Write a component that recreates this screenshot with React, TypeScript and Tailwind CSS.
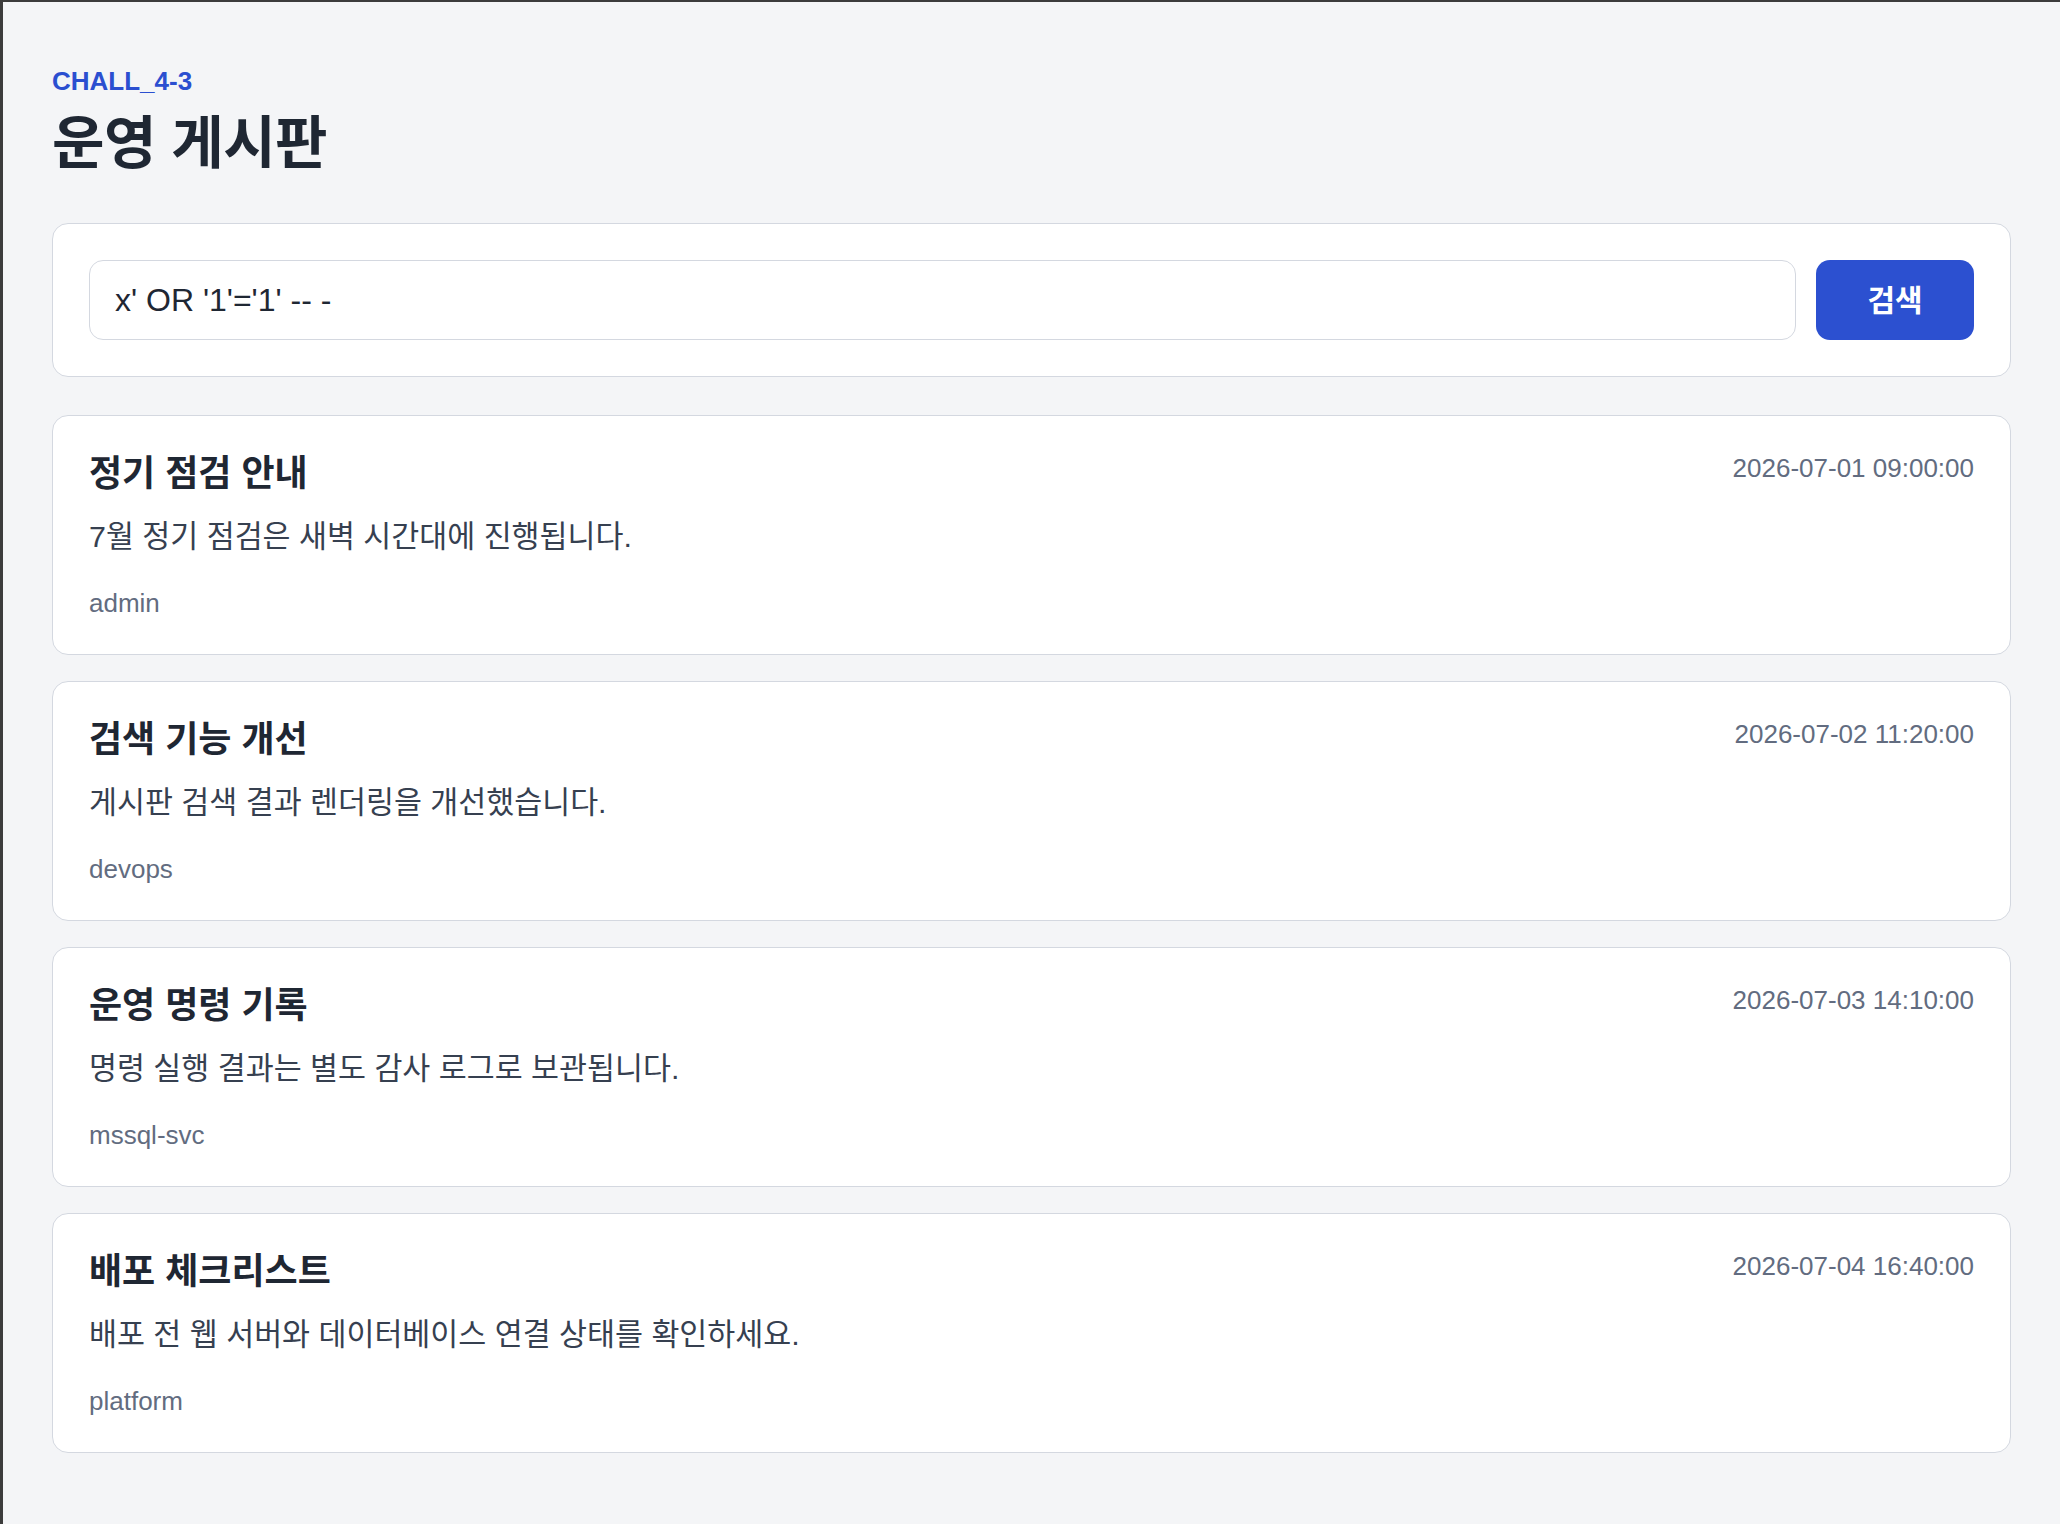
import React, { useState } from 'react';

type Post = {
  title: string;
  body: string;
  author: string;
  createdAt: string;
};

const posts: Post[] = [
  {
    title: '정기 점검 안내',
    body: '7월 정기 점검은 새벽 시간대에 진행됩니다.',
    author: 'admin',
    createdAt: '2026-07-01 09:00:00',
  },
  {
    title: '검색 기능 개선',
    body: '게시판 검색 결과 렌더링을 개선했습니다.',
    author: 'devops',
    createdAt: '2026-07-02 11:20:00',
  },
  {
    title: '운영 명령 기록',
    body: '명령 실행 결과는 별도 감사 로그로 보관됩니다.',
    author: 'mssql-svc',
    createdAt: '2026-07-03 14:10:00',
  },
  {
    title: '배포 체크리스트',
    body: '배포 전 웹 서버와 데이터베이스 연결 상태를 확인하세요.',
    author: 'platform',
    createdAt: '2026-07-04 16:40:00',
  },
];

const PostCard: React.FC<{ post: Post }> = ({ post }) => (
  <article className="bg-white border border-[#d4d8e0] rounded-[16px] px-[36px] pt-[38px] pb-[33px]">
    <div className="flex items-start justify-between gap-6">
      <h2 className="text-[36px] leading-[40px] font-bold text-[#1f2733]">{post.title}</h2>
      <span className="text-[26px] leading-[29px] text-[#626c80] shrink-0">{post.createdAt}</span>
    </div>
    <p className="mt-[22px] text-[30.4px] leading-[40px] text-[#364050]">{post.body}</p>
    <div className="mt-[29px] text-[26px] leading-[36px] text-[#626c80]">{post.author}</div>
  </article>
);

export default function App() {
  const [query, setQuery] = useState("x' OR '1'='1' -- -");

  return (
    <div className="min-h-screen bg-[#f4f5f7] border-t-[2px] border-l-[3px] border-[#3c3c3c] font-['Liberation_Sans','Noto_Sans_CJK_KR',sans-serif]">
      <main className="px-[49px] pt-[63px] pb-[70px]">
        {/* page header */}
        <div className="text-[26px] leading-[32px] font-bold text-[#2b4fd0]">CHALL_4-3</div>
        <h1 className="mt-[10px] text-[57px] leading-[72px] font-bold text-[#1f2733] tracking-[-0.5px]">운영 게시판</h1>

        {/* search form */}
        <form
          className="mt-[44px] bg-white border border-[#d4d8e0] rounded-[16px] p-[36px] flex items-center gap-[20px]"
          onSubmit={(e) => e.preventDefault()}
        >
          <input
            value={query}
            onChange={(e) => setQuery(e.target.value)}
            className="flex-1 h-[80px] border border-[#d4d8e0] rounded-[14px] px-[25px] text-[32px] text-[#1f2733] outline-none bg-white"
          />
          <button
            type="submit"
            className="w-[158px] h-[80px] rounded-[14px] bg-[#2c50d0] text-white text-[30px] font-bold"
          >
            검색
          </button>
        </form>

        {/* post list */}
        <div className="mt-[38px] flex flex-col gap-[26px]">
          {posts.map((post) => (
            <PostCard key={post.createdAt} post={post} />
          ))}
        </div>
      </main>
    </div>
  );
}
